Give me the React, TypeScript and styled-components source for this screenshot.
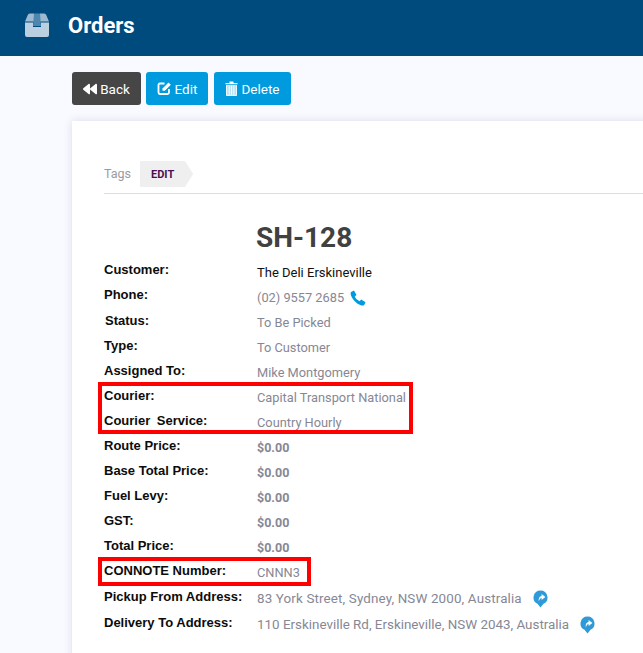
import styled, { createGlobalStyle } from 'styled-components';
import { FaBackward } from 'react-icons/fa';

const GlobalStyle = createGlobalStyle`
  html, body {
    margin: 0;
    padding: 0;
    height: 100%;
    overflow: hidden;
    background: #f9faff;
    font-family: Roboto, "Liberation Sans", sans-serif;
  }
`;

const Page = styled.div`
  width: 643px;
  height: 653px;
  overflow: hidden;
`;

const Header = styled.header`
  display: flex;
  align-items: center;
  height: 56px;
  background: #004b7e;
  padding: 0 0 6px 25px;
  box-sizing: border-box;
`;

const PageTitle = styled.h1`
  margin: 0 0 0 19px;
  font-size: 22px;
  font-weight: 700;
  color: #fff;
`;

const Content = styled.main`
  padding: 16px 0 0 72px;
`;

const Toolbar = styled.div`
  display: flex;
  gap: 5px;
  margin-bottom: 16px;
`;

const ActionButton = styled.button<{ $dark?: boolean; $width: number; $shift?: number }>`
  display: flex;
  align-items: center;
  justify-content: center;
  gap: 3px;
  width: ${(p) => p.$width}px;
  height: 33px;
  margin-left: ${(p) => p.$shift ?? 0}px;
  padding: 0;
  border: 0;
  border-radius: 3px;
  background: ${(p) => (p.$dark ? '#464646' : '#009ade')};
  color: #fff;
  font-family: Roboto, sans-serif;
  font-size: 13.5px;
`;

const Card = styled.section`
  position: relative;
  width: 640px;
  height: 560px;
  padding: 40px 0 0 32px;
  box-sizing: border-box;
  background: #fff;
  box-shadow: 0 0 8px rgba(80, 80, 120, 0.18);
`;

const TagsRow = styled.div`
  display: flex;
  align-items: center;
  height: 32px;
  border-bottom: 1px solid #ddd;
`;

const TagsLabel = styled.span`
  width: 36px;
  margin-bottom: 8px;
  font-size: 12.5px;
  color: #9a9aa0;
`;

const Tag = styled.span`
  display: flex;
  align-items: center;
  height: 26px;
  margin-bottom: 6px;
  padding: 0 19px 0 11px;
  font-size: 11px;
  font-weight: 700;
  color: #4b0f50;
  background: #efefef;
  clip-path: polygon(0 0, 45px 0, 100% 50%, 45px 100%, 0 100%);
`;

const OrderNumber = styled.h2`
  margin: 27px 0 6px 152px;
  font-size: 28px;
  line-height: 34px;
  font-weight: 700;
  color: #414141;
`;

const DetailRow = styled.div<{ $tall?: boolean }>`
  display: flex;
  height: ${(p) => (p.$tall ? 26 : 25)}px;
  align-items: flex-start;
`;

const Label = styled.span<{ $indent?: number; $drop?: boolean; $wordGap?: number }>`
  width: ${(p) => 153 - (p.$indent ?? 0)}px;
  margin-left: ${(p) => p.$indent ?? 0}px;
  margin-top: ${(p) => (p.$drop ? 1 : 0)}px;
  font-family: "Liberation Sans", Arial, sans-serif;
  font-size: 13px;
  line-height: 18px;
  font-weight: 700;
  word-spacing: ${(p) => p.$wordGap ?? 0}px;
  color: #0c0c0c;
`;

const Value = styled.span<{ $dark?: boolean; $bold?: boolean; $size?: number; $spacing?: number }>`
  display: flex;
  align-items: center;
  margin-top: 3px;
  font-size: ${(p) => p.$size ?? 12.8}px;
  letter-spacing: ${(p) => p.$spacing ?? 0}px;
  line-height: 18px;
  white-space: nowrap;
  font-weight: ${(p) => (p.$bold ? 700 : 400)};
  color: ${(p) => (p.$dark ? '#111' : '#878794')};
`;

const Highlight = styled.div<{ $top: number; $left: number; $width: number; $height: number }>`
  position: absolute;
  top: ${(p) => p.$top}px;
  left: ${(p) => p.$left}px;
  width: ${(p) => p.$width}px;
  height: ${(p) => p.$height}px;
  box-sizing: border-box;
  border: 4px solid #f00;
  pointer-events: none;
`;

const BoxIcon = () => (
  <svg width="24" height="24" viewBox="0 0 24 24" style={{ display: 'block' }}>
    <path d="M0 8.5 L3 1.5 Q4 0.5 5 0.5 H9 V8.5 Z M15 0.5 H19 Q20 0.5 21 1.5 L24 8.5 H15 Z" fill="#9dbad0" />
    <path d="M0 9.5 H8 V14 H16 V9.5 H24 V22 Q24 24 22 24 H2 Q0 24 0 22 Z" fill="#bad0e0" />
    <path d="M9 0.5 H15 L16 13 H8 Z" fill="#4d87b0" />
  </svg>
);

const EditIcon = () => (
  <svg width="15" height="15" viewBox="0 0 15 15">
    <path d="M7.5 2.5 H3 Q1.5 2.5 1.5 4 V11.5 Q1.5 13 3 13 H10.5 Q12 13 12 11.5 V8" fill="none" stroke="#fff" strokeWidth="1.8" />
    <path d="M5.5 7.5 L11.5 1.5 L13.8 3.8 L7.8 9.8 H5.5 Z" fill="#fff" />
  </svg>
);

const TrashIcon = () => (
  <svg width="13" height="15" viewBox="0 0 13 15">
    <path d="M4.5 0.5 H8.5 V2 H12.5 V3.2 H0.5 V2 H4.5 Z" fill="#fff" />
    <path d="M1.5 4 H11.5 V14.5 H1.5 Z" fill="#b8e2f5" />
    <path d="M1.5 4 V14.5 H11.5 V4 M4.2 4.5 V14 M6.5 4.5 V14 M8.8 4.5 V14" fill="none" stroke="#fff" strokeWidth="0.9" />
  </svg>
);

const PhoneIcon = () => (
  <svg width="16" height="16" viewBox="0 0 16 16" style={{ marginLeft: 6, marginTop: -1 }}>
    <path
      d="M1 2 L4 0.5 L6.5 5 L4.8 6.6 C5.6 8.6 7.4 10.4 9.6 11.3 L11.2 9.6 L15.5 12.2 L14.2 15 C13.4 15.7 12 15.7 10.8 15.2 C6.4 13.6 2.6 9.6 1 5.4 C0.6 4.2 0.5 3 1 2 Z"
      fill="#009ade"
    />
  </svg>
);

const MapPinIcon = () => (
  <svg width="15" height="18" viewBox="0 0 15 18" style={{ marginLeft: 11 }}>
    <path d="M7.5 0.5 A7 7 0 0 1 10.5 13.8 L7.5 17.5 L4.5 13.8 A7 7 0 0 1 7.5 0.5 Z" fill="#2e9bd8" />
    <path d="M5.8 11.5 C5.2 8 6.6 6.2 8.6 6 V4 L12.4 7 L8.6 10 V8.1 C7.4 8.2 6.4 9.2 5.8 11.5 Z" fill="#fff" />
  </svg>
);

type Detail = {
  label: string;
  value: string;
  dark?: boolean;
  bold?: boolean;
  indent?: number;
  drop?: boolean;
  tall?: boolean;
  size?: number;
  spacing?: number;
  wordGap?: number;
  icon?: 'phone' | 'pin';
};

const details: Detail[] = [
  { label: 'Customer:', value: 'The Deli Erskineville', dark: true, size: 13 },
  { label: 'Phone:', value: '(02) 9557 2685', icon: 'phone' },
  { label: 'Status:', value: 'To Be Picked', indent: 1, drop: true },
  { label: 'Type:', value: 'To Customer', drop: true },
  { label: 'Assigned To:', value: 'Mike Montgomery', drop: true },
  { label: 'Courier:', value: 'Capital Transport National', drop: true },
  { label: 'Courier Service:', value: 'Country Hourly', drop: true, wordGap: 3 },
  { label: 'Route Price:', value: '$0.00', bold: true, drop: true, size: 12.5 },
  { label: 'Base Total Price:', value: '$0.00', bold: true, drop: true, size: 12.5 },
  { label: 'Fuel Levy:', value: '$0.00', bold: true, drop: true, size: 12.5 },
  { label: 'GST:', value: '$0.00', bold: true, drop: true, size: 12.5 },
  { label: 'Total Price:', value: '$0.00', bold: true, drop: true, size: 12.5 },
  { label: 'CONNOTE Number:', value: 'CNNN3', tall: true, drop: true },
  { label: 'Pickup From Address:', value: '83 York Street, Sydney, NSW 2000, Australia', icon: 'pin', tall: true, drop: true, size: 13.4, spacing: 0.14 },
  { label: 'Delivery To Address:', value: '110 Erskineville Rd, Erskineville, NSW 2043, Australia', icon: 'pin', drop: true, size: 13.4 },
];

export default function App() {
  return (
    <Page>
      <GlobalStyle />
      <Header>
        <BoxIcon />
        <PageTitle>Orders</PageTitle>
      </Header>
      <Content>
        <Toolbar>
          <ActionButton $dark $width={69}><FaBackward size={14} />Back</ActionButton>
          <ActionButton $width={62}><EditIcon />Edit</ActionButton>
          <ActionButton $width={77} $shift={1}><TrashIcon />Delete</ActionButton>
        </Toolbar>
        <Card>
          <TagsRow>
            <TagsLabel>Tags</TagsLabel>
            <Tag>EDIT</Tag>
          </TagsRow>
          <OrderNumber>SH-128</OrderNumber>
          {details.map((d) => (
            <DetailRow key={d.label} $tall={d.tall}>
              <Label $indent={d.indent} $drop={d.drop} $wordGap={d.wordGap}>{d.label}</Label>
              <Value $dark={d.dark} $bold={d.bold} $size={d.size} $spacing={d.spacing}>
                {d.value}
                {d.icon === 'phone' && <PhoneIcon />}
                {d.icon === 'pin' && <MapPinIcon />}
              </Value>
            </DetailRow>
          ))}
          <Highlight $top={261} $left={26} $width={315} $height={52} />
          <Highlight $top={436} $left={26} $width={213} $height={29} />
        </Card>
      </Content>
    </Page>
  );
}
